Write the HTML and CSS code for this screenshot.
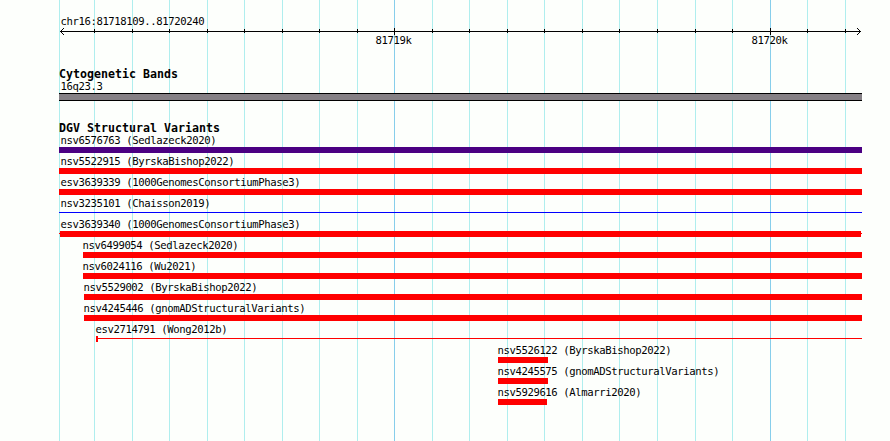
FILE: index.html
```html
<!DOCTYPE html>
<html lang="en">
<head>
  <meta charset="UTF-8">
  <meta name="viewport" content="width=device-width, initial-scale=1.0">
  <title>chr16:81718109..81720240</title>
  <link rel="stylesheet" href="styles.css">
</head>
<body>
  <div class="browser">
    <!-- grid lines -->
    <svg class="grid" width="890" height="441" shape-rendering="crispEdges">
      <path class="minor" d="M59.5 0V441M94.5 0V441M132.5 0V441M169.5 0V441M207.5 0V441M244.5 0V441M282.5 0V441M319.5 0V441M357.5 0V441M432.5 0V441M469.5 0V441M507.5 0V441M544.5 0V441M582.5 0V441M619.5 0V441M657.5 0V441M695.5 0V441M732.5 0V441M807.5 0V441M845.5 0V441"/>
      <path class="major" d="M394.5 0V441M770.5 0V441"/>
    </svg>

    <div class="panel">
      <div class="ruler">
        <div class="label">chr16:81718109..81720240</div>
        <svg class="axis" width="803" height="8" shape-rendering="crispEdges">
          <path d="M1 3.5H802"/>
          <path d="M35.5 1V5M73.5 1V5M110.5 1V5M148.5 1V5M185.5 1V5M223.5 1V5M260.5 1V5M298.5 1V5M373.5 1V5M410.5 1V5M448.5 1V5M485.5 1V5M523.5 1V5M560.5 1V5M598.5 1V5M636.5 1V5M673.5 1V5M748.5 1V5M786.5 1V5"/>
          <path d="M335.5 0V7M711.5 0V7"/>
          <path class="arrow" d="M2 2h1v1h-1zM3 1h1v1h-1zM4 0h1v1h-1zM2 4h1v1h-1zM3 5h1v1h-1zM4 6h1v1h-1z"/>
          <path class="arrow" d="M800 2h1v1h-1zM799 1h1v1h-1zM798 0h1v1h-1zM800 4h1v1h-1zM799 5h1v1h-1zM798 6h1v1h-1z"/>
        </svg>
        <div class="ticks">
          <span>81719k</span>
          <span>81720k</span>
        </div>
      </div>

      <div class="track cytobands">
        <h2>Cytogenetic Bands</h2>
        <div class="label">16q23.3</div>
        <div class="band"></div>
      </div>

      <div class="track variants">
        <h2>DGV Structural Variants</h2>
        <div class="feature full">
          <div class="label">nsv6576763 (Sedlazeck2020)</div>
          <div class="bar complex"></div>
        </div>
        <div class="feature full">
          <div class="label">nsv5522915 (ByrskaBishop2022)</div>
          <div class="bar"></div>
        </div>
        <div class="feature full">
          <div class="label">esv3639339 (1000GenomesConsortiumPhase3)</div>
          <div class="bar"></div>
        </div>
        <div class="feature full">
          <div class="label">nsv3235101 (Chaisson2019)</div>
          <div class="bar line gain"></div>
        </div>
        <div class="feature full">
          <div class="label">esv3639340 (1000GenomesConsortiumPhase3)</div>
          <div class="bar line ci"><div class="core"></div></div>
        </div>
        <div class="feature" style="margin-left: 24px">
          <div class="label">nsv6499054 (Sedlazeck2020)</div>
          <div class="bar"></div>
        </div>
        <div class="feature" style="margin-left: 24px">
          <div class="label">nsv6024116 (Wu2021)</div>
          <div class="bar"></div>
        </div>
        <div class="feature" style="margin-left: 25px">
          <div class="label">nsv5529002 (ByrskaBishop2022)</div>
          <div class="bar"></div>
        </div>
        <div class="feature" style="margin-left: 25px">
          <div class="label">nsv4245446 (gnomADStructuralVariants)</div>
          <div class="bar"></div>
        </div>
        <div class="feature" style="margin-left: 37px">
          <div class="label">esv2714791 (Wong2012b)</div>
          <div class="bar line start"></div>
        </div>
        <div class="feature" style="margin-left: 439px">
          <div class="label">nsv5526122 (ByrskaBishop2022)</div>
          <div class="bar" style="width: 50px"></div>
        </div>
        <div class="feature" style="margin-left: 439px">
          <div class="label">nsv4245575 (gnomADStructuralVariants)</div>
          <div class="bar" style="width: 50px"></div>
        </div>
        <div class="feature" style="margin-left: 439px">
          <div class="label">nsv5929616 (Almarri2020)</div>
          <div class="bar" style="width: 49px"></div>
        </div>
      </div>
    </div>
  </div>
</body>
</html>
```
FILE: styles.css
```css
body {
  margin: 0;
  background-color: #fdfffc;
  color: #000;
  font-family: "DejaVu Sans Mono", "Liberation Mono", monospace;
  font-size: 10.6px;
  line-height: 10px;
}

.browser {
  position: relative;
  height: 441px;
  overflow: hidden;
}

.grid {
  position: absolute;
  top: 0;
  left: 0;
  fill: none;
}

.minor {
  stroke: #afeeee;
}

.major {
  stroke: #87ceeb;
}

.panel {
  position: relative;
  width: 803px;
  margin-left: 59px;
  padding-top: 16px;
}

.label,
.ticks {
  letter-spacing: -0.38px;
  white-space: nowrap;
}

.label {
  height: 12px;
  padding-left: 1.4px;
}

.ruler {
  height: 53px;
}

.axis {
  display: block;
  fill: none;
  stroke: #000;
}

.arrow {
  fill: #000;
  stroke: none;
}

.ticks {
  display: flex;
  gap: 340px;
  margin-top: -1px;
  padding-left: 316.4px;
}

.ticks span {
  width: 36px;
}

h2 {
  height: 12px;
  margin: 0;
  font-size: 11.6px;
  font-weight: bold;
  letter-spacing: 0.016px;
}

.band {
  box-sizing: border-box;
  height: 8px;
  border: solid #000;
  border-width: 1px 0;
  background-color: #858085;
}

.variants {
  margin-top: 22px;
}

.feature {
  height: 21px;
}

.feature .label {
  height: 12px;
  margin-left: -2px;
}

.full .label {
  margin-left: 0;
}

.bar {
  height: 6px;
  background-color: #f00;
}

.complex {
  background-color: #4b0082;
}

.line {
  background: linear-gradient(#f00, #f00) 0 2px / 100% 1px no-repeat;
}

.gain {
  background-image: linear-gradient(#00f, #00f);
}

.core {
  height: 6px;
  margin: 0 1px;
  background-color: #f00;
}

.start {
  box-sizing: border-box;
  border-left: 2px solid #f00;
}
```
